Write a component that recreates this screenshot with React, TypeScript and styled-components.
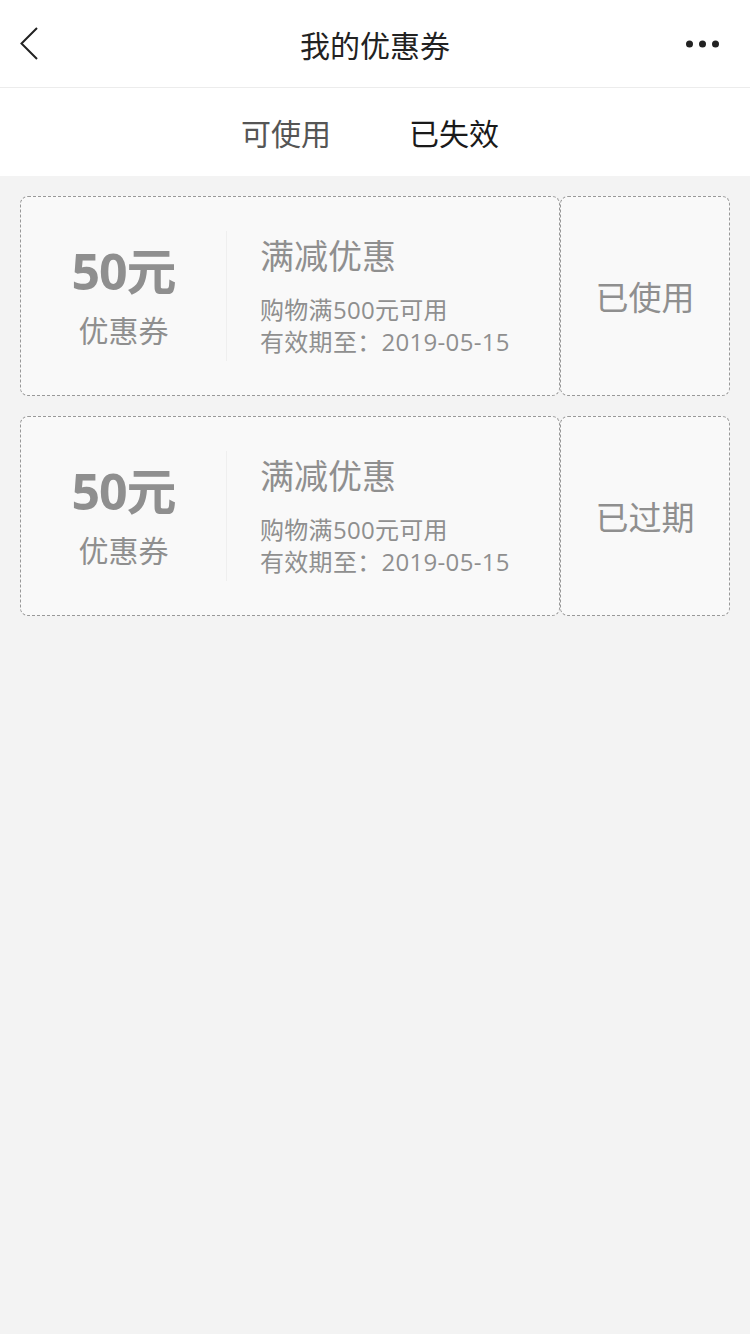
import React from 'react';
import styled, { createGlobalStyle } from 'styled-components';

const GlobalStyle = createGlobalStyle`
    html, body {
        margin: 0;
        padding: 0;
        background: #f3f3f3;
    }
    body {
        font-family: "Open Sans", "Noto Sans CJK SC", sans-serif;
    }
`

const Page = styled.div`
    width: 750px;
    min-height: 1334px;
    background: #f3f3f3;
`

const Header = styled.div`
    height: 88px;
    display: flex;
    align-items: center;
    justify-content: space-between;
    padding: 0 20px;
    box-sizing: border-box;
    background: #fff;
    border-bottom: 1px solid #ececec;
`

const Title = styled.div`
    font-size: 30px;
    color: #222;
`

const IconBox = styled.div<{ end?: boolean }>`
    width: 50px;
    display: flex;
    align-items: center;
    justify-content: ${(p) => (p.end ? 'flex-end' : 'flex-start')};
    svg {
        display: block;
    }
`

const Tabs = styled.div`
    height: 88px;
    display: flex;
    align-items: center;
    justify-content: center;
    gap: 78px;
    padding-right: 10px;
    background: #fff;
`

const Tab = styled.div<{ active?: boolean }>`
    font-size: 30px;
    color: ${(p) => (p.active ? '#1a1a1a' : '#555')};
`

const List = styled.div`
    padding: 20px 20px;
    display: flex;
    flex-direction: column;
    gap: 20px;
`

const Coupon = styled.div`
    display: flex;
    height: 200px;
`

const CouponMain = styled.div`
    width: 540px;
    box-sizing: border-box;
    border: 1px dashed #999;
    border-radius: 8px;
    background: #f9f9f9;
    display: flex;
    align-items: center;
`

const Amount = styled.div`
    width: 205px;
    height: 130px;
    border-right: 1px solid #efefef;
    display: flex;
    flex-direction: column;
    align-items: center;
    justify-content: center;
    color: #8f8f8f;
`

const Price = styled.div`
    font-size: 50px;
    font-weight: bold;
    line-height: 60px;
    letter-spacing: -1px;
`

const Label = styled.div`
    font-size: 30px;
    line-height: 40px;
    margin-top: 10px;
`

const Info = styled.div`
    padding-left: 33px;
    color: #8f8f8f;
    display: flex;
    flex-direction: column;
`

const InfoTitle = styled.div`
    font-size: 34px;
    line-height: 44px;
    margin-bottom: 16px;
`

const InfoLine = styled.div`
    font-size: 24px;
    line-height: 32px;
    letter-spacing: 0.3px;
`

const Status = styled.div`
    width: 170px;
    box-sizing: border-box;
    border: 1px dashed #999;
    border-radius: 8px;
    background: #f9f9f9;
    display: flex;
    align-items: center;
    justify-content: center;
    font-size: 33px;
    color: #8f8f8f;
`

const coupons = [
    { amount: '50元', title: '满减优惠', rule: '购物满500元可用', expire: '2019-05-15', status: '已使用' },
    { amount: '50元', title: '满减优惠', rule: '购物满500元可用', expire: '2019-05-15', status: '已过期' },
]

const App = () => {
    return (
        <Page>
            <GlobalStyle />
            <Header>
                <IconBox>
                    <svg width="20" height="34" viewBox="0 0 20 34">
                        <path d="M17 1 L1.5 16.5 L17 32" fill="none" stroke="#222" strokeWidth="2" />
                    </svg>
                </IconBox>
                <Title>我的优惠券</Title>
                <IconBox end>
                    <svg width="44" height="10" viewBox="0 0 44 10">
                        <circle cx="3.5" cy="5" r="3.5" fill="#222" />
                        <circle cx="16.5" cy="5" r="3.5" fill="#222" />
                        <circle cx="29.5" cy="5" r="3.5" fill="#222" />
                    </svg>
                </IconBox>
            </Header>
            <Tabs>
                <Tab>可使用</Tab>
                <Tab active>已失效</Tab>
            </Tabs>
            <List>
                {coupons.map((c, i) => (
                    <Coupon key={i}>
                        <CouponMain>
                            <Amount>
                                <Price>{c.amount}</Price>
                                <Label>优惠券</Label>
                            </Amount>
                            <Info>
                                <InfoTitle>{c.title}</InfoTitle>
                                <InfoLine>{c.rule}</InfoLine>
                                <InfoLine>有效期至：{c.expire}</InfoLine>
                            </Info>
                        </CouponMain>
                        <Status>{c.status}</Status>
                    </Coupon>
                ))}
            </List>
        </Page>
    )
}

export default App;
